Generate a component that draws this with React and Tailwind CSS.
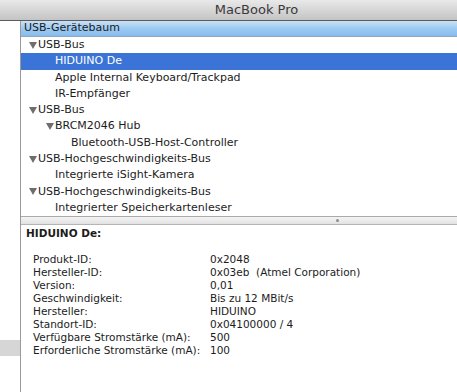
import React from "react";

const font = { fontFamily: '"DejaVu Sans", "Lucida Grande", sans-serif' };

function Tri() {
  return (
    <svg width="8" height="7" viewBox="0 0 8 7" className="mr-[1px] shrink-0">
      <path d="M0 0 L8 0 L4 7 Z" fill="#6e6e6e" />
    </svg>
  );
}

const tree = [
  { t: "USB-Bus", pl: "pl-[8px]", tri: true },
  { t: "HIDUINO De", pl: "pl-[34px]", sel: true },
  { t: "Apple Internal Keyboard/Trackpad", pl: "pl-[34px]" },
  { t: "IR-Empfänger", pl: "pl-[34px]" },
  { t: "USB-Bus", pl: "pl-[8px]", tri: true },
  { t: "BRCM2046 Hub", pl: "pl-[25px]", tri: true },
  { t: "Bluetooth-USB-Host-Controller", pl: "pl-[50px]" },
  { t: "USB-Hochgeschwindigkeits-Bus", pl: "pl-[8px]", tri: true },
  { t: "Integrierte iSight-Kamera", pl: "pl-[34px]" },
  { t: "USB-Hochgeschwindigkeits-Bus", pl: "pl-[8px]", tri: true },
  { t: "Integrierter Speicherkartenleser", pl: "pl-[34px]" },
];

const details = [
  ["Produkt-ID:", "0x2048"],
  ["Hersteller-ID:", "0x03eb  (Atmel Corporation)"],
  ["Version:", "0,01"],
  ["Geschwindigkeit:", "Bis zu 12 MBit/s"],
  ["Hersteller:", "HIDUINO"],
  ["Standort-ID:", "0x04100000 / 4"],
  ["Verfügbare Stromstärke (mA):", "500"],
  ["Erforderliche Stromstärke (mA):", "100"],
];

export default function App() {
  return (
    <div className="w-[457px] h-[392px] overflow-hidden bg-white flex flex-col text-[#1c1c1c]" style={font}>
      <div className="h-[21px] shrink-0 bg-gradient-to-b from-[#e9e9e9] to-[#c4c4c4] border-b border-[#5c5c5c] flex items-center justify-center pl-[56px]">
        <span className="text-[13px] text-[#3a3a3a]" style={{ fontFamily: '"Lucida Grande", "DejaVu Sans", sans-serif' }}>MacBook Pro</span>
      </div>
      <div className="flex flex-1 min-h-0">
        <div className="w-[21px] shrink-0 border-r border-[#9a9a9a] flex flex-col">
          <div className="h-[319px]" />
          <div className="h-[16px] bg-[#d6d6d6]" />
        </div>
        <div className="flex-1 flex flex-col min-w-0">
          <div className="h-[16px] bg-gradient-to-b from-[#c9e0f7] via-[#9ccaf2] to-[#86bcee] border-b border-[#8fa6bd] flex items-center pl-[3px] text-[11px]">
            USB-Gerätebaum
          </div>
          <div className="flex flex-col">
            {tree.map((r, i) => (
              <div
                key={i}
                className={`h-[16.3px] flex items-center text-[11px] whitespace-nowrap ${r.pl} ${r.sel ? "bg-[#3b74d6] text-white" : ""}`}
              >
                {r.tri && <Tri />}
                {r.t}
              </div>
            ))}
          </div>
          <div className="h-[9px] border-t border-[#a9a9a9] border-b border-b-[#b5b5b5] bg-gradient-to-b from-[#f4f4f4] to-[#e2e2e2] flex items-center pl-[315px]">
            <div className="w-[3px] h-[3px] rounded-full bg-[#8c8c8c]" />
          </div>
          <div className="pl-[5px] pt-[1px] text-[10.5px] font-bold">HIDUINO De:</div>
          <div className="pl-[12px] pt-[11px] flex flex-col text-[10.5px]">
            {details.map(([k, v], i) => (
              <div key={i} className="h-[13px] flex items-center whitespace-pre">
                <span className="w-[177px] shrink-0">{k}</span>
                <span>{v}</span>
              </div>
            ))}
          </div>
        </div>
      </div>
    </div>
  );
}
